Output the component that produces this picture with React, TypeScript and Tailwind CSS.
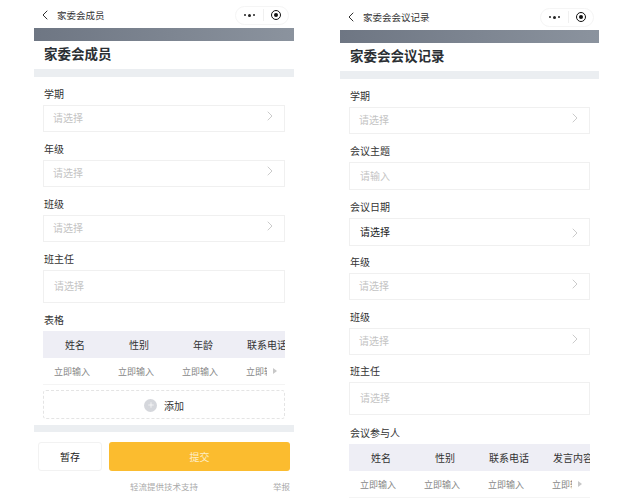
import React from "react";
import { ChevronLeft, ChevronRight, Plus } from "lucide-react";

const fontClass = "font-['Noto_Sans_CJK_SC','Noto_Sans',sans-serif]";

function NavBar({ title, className }: { title: string; className: string }) {
    return (
        <div className={`flex items-center ${className}`}>
            <ChevronLeft className="w-4 h-4 text-[#222] ml-[3px]" strokeWidth={1.4} />
            <span className="ml-[4px] text-[9.5px] text-[#333]">{title}</span>
            <div className="ml-auto mr-[5px] w-[54px] h-[19px] rounded-full border border-[#f5f5f5] flex items-center">
                <div className="w-[27px] flex justify-center items-center gap-[2px]">
                    <span className="w-[2px] h-[2px] rounded-full bg-[#222]" />
                    <span className="w-[3px] h-[3px] rounded-full bg-[#222]" />
                    <span className="w-[2px] h-[2px] rounded-full bg-[#222]" />
                </div>
                <div className="w-px h-[12px] bg-[#f0f0f0]" />
                <div className="flex-1 flex justify-center">
                    <div className="w-[10px] h-[10px] rounded-full border-[1.5px] border-[#111] flex items-center justify-center">
                        <span className="w-[4px] h-[4px] rounded-full bg-[#111]" />
                    </div>
                </div>
            </div>
        </div>
    );
}

function Header({ title }: { title: string }) {
    return (
        <>
            <div className="h-[13px] bg-gradient-to-r from-[#6e7683] to-[#8b939e]" />
            <div className="h-[28px] flex items-center pl-[10px] pb-[3px] text-[13.5px] font-bold text-[#2b2f33]">
                {title}
            </div>
            <div className="h-[8px] bg-[#ebeef1]" />
        </>
    );
}

function Field({
    label,
    text = "请选择",
    arrow,
    height = "h-[27px]",
    indent = "pl-[9px]",
    dark,
    top = "mt-[7px]",
}: {
    label: string;
    text?: string;
    arrow?: boolean;
    height?: string;
    indent?: string;
    dark?: boolean;
    top?: string;
}) {
    return (
        <div className={`px-[9px] ${top}`}>
            <div className="h-[18px] pl-px flex items-center text-[10px] text-[#333]">{label}</div>
            <div
                className={`mt-[3px] border border-[#f0f0f0] flex items-center ${height} ${indent} pr-[6px] text-[10px] pb-[2px] ${
                    dark ? "text-[#222]" : "text-[#c4c4c4]"
                }`}
            >
                {text}
                {arrow && (
                    <ChevronRight
                        className={`ml-auto w-4 h-4 text-[#b0b0b0] ${dark ? "mt-[4px]" : "-mt-[3px]"}`}
                        strokeWidth={1}
                    />
                )}
            </div>
        </div>
    );
}

function Table({ columns }: { columns: string[] }) {
    return (
        <div className="mx-[9px] mt-[3px] overflow-hidden">
            <div className="h-[27px] bg-[#eeeef5] flex items-center text-[10px] text-[#333]">
                {columns.map((c) => (
                    <div key={c} className="w-[64px] shrink-0 text-center whitespace-nowrap">
                        {c}
                    </div>
                ))}
            </div>
            <div className="relative h-[27px] pt-px border-b border-[#f4f4f4] flex items-center text-[9px] text-[#888]">
                {columns.map((c) => (
                    <div key={c} className="w-[64px] shrink-0 pl-[11px] whitespace-nowrap">
                        立即输入
                    </div>
                ))}
                <div className="absolute right-0 top-0 h-[25px] w-[18px] bg-white flex items-center">
                    <span className="ml-[6px] w-0 h-0 border-y-[3px] border-y-transparent border-l-[4px] border-l-[#c8c8c8]" />
                </div>
            </div>
        </div>
    );
}

export default function App() {
    return (
        <div className={`w-[636px] h-[500px] overflow-hidden bg-white flex pl-[34px] gap-[46px] ${fontClass}`}>
            <div className="w-[260px] shrink-0 h-[500px]">
                <NavBar title="家委会成员" className="h-[28px] pt-[2px]" />
                <Header title="家委会成员" />
                <Field label="学期" arrow />
                <Field label="年级" arrow />
                <Field label="班级" arrow />
                <Field label="班主任" height="h-[33px]" indent="pl-[10px]" />
                <div className="px-[9px] mt-[7px] h-[18px] pl-[10px] flex items-center text-[10px] text-[#333]">表格</div>
                <Table columns={["姓名", "性别", "年龄", "联系电话"]} />
                <div className="mx-[9px] mt-[5px] h-[29px] pt-px border border-dashed border-[#e4e4e4] rounded-[3px] flex items-center justify-center text-[10px] text-[#333]">
                    <span className="w-[13px] h-[13px] rounded-full bg-[#d5d7dc] flex items-center justify-center mr-[7px]">
                        <Plus className="w-[8px] h-[8px] text-white" strokeWidth={2} />
                    </span>
                    添加
                </div>
                <div className="h-[7px] bg-[#ebeef1] mt-[6px]" />
                <div className="flex mt-[10px] pl-[4px] gap-[7px]">
                    <div className="w-[64px] h-[29px] border border-[#f2f2f2] rounded-[3px] flex items-center justify-center text-[10px] text-[#222]">
                        暂存
                    </div>
                    <div className="w-[181px] h-[29px] bg-[#fbbc2f] rounded-[3px] flex items-center justify-center text-[10px] text-[#fdeec8]">
                        提交
                    </div>
                </div>
                <div className="flex mt-[8px] text-[8.5px] text-[#aaa] h-[14px] items-center whitespace-nowrap">
                    <span className="ml-[96px]">轻流提供技术支持</span>
                    <span className="ml-[75px]">举报</span>
                </div>
            </div>
            <div className="w-[259px] shrink-0 h-[500px]">
                <NavBar title="家委会会议记录" className="h-[30px] pt-[4px]" />
                <Header title="家委会会议记录" />
                <Field label="学期" arrow />
                <Field label="会议主题" text="请输入" height="h-[28px]" indent="pl-[10px]" />
                <Field label="会议日期" arrow dark indent="pl-[10px]" height="h-[28px]" />
                <Field label="年级" arrow top="mt-[6px]" />
                <Field label="班级" arrow />
                <Field label="班主任" height="h-[33px]" indent="pl-[10px]" top="mt-[6px]" />
                <div className="px-[9px] mt-[8px] h-[18px] pl-[10px] flex items-center text-[10px] text-[#333]">会议参与人</div>
                <Table columns={["姓名", "性别", "联系电话", "发言内容"]} />
            </div>
        </div>
    );
}
